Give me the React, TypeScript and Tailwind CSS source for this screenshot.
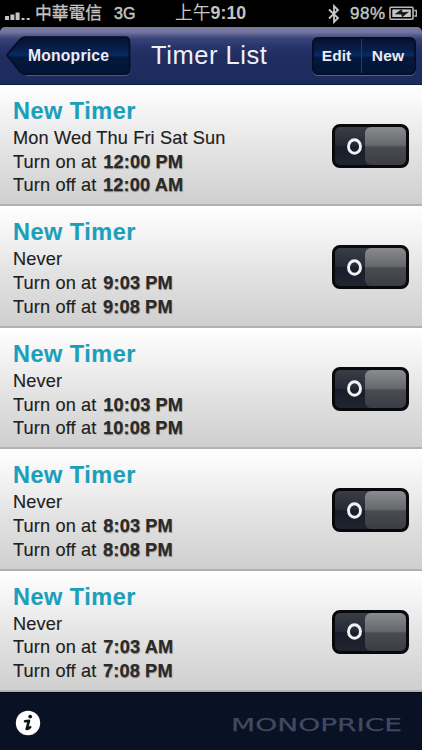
const timers = [
  { days: 'Mon Wed Thu Fri Sat Sun', on: '12:00 PM', off: '12:00 AM' },
  { days: 'Never', on: '9:03 PM', off: '9:08 PM' },
  { days: 'Never', on: '10:03 PM', off: '10:08 PM' },
  { days: 'Never', on: '8:03 PM', off: '8:08 PM' },
  { days: 'Never', on: '7:03 AM', off: '7:08 PM' },
];

function StatusBar() {
  return (
    <div className="flex h-[27px] shrink-0 items-center bg-black pl-[5px] pr-[4px] text-[17px] leading-[27px] text-[#c4c4c4]">
      <svg width="26" height="10" viewBox="0 0 26 10" fill="#c4c4c4" className="mt-[4px]">
        <rect x="0" y="5" width="4" height="4" />
        <rect x="5.4" y="3.5" width="4" height="5.5" />
        <rect x="10.6" y="1.5" width="4" height="7.5" />
        <rect x="16.5" y="7" width="3" height="2" />
        <rect x="21.7" y="7" width="3" height="2" />
      </svg>
      <span className="ml-[4px] w-[79px] whitespace-nowrap text-[16.8px] [-webkit-text-stroke:0.3px_#c4c4c4]">中華電信</span>
      <span className="w-[61px] text-[16px] [-webkit-text-stroke:0.5px_#c4c4c4]">3G</span>
      <span className="w-[152px] whitespace-nowrap text-[17.8px] font-bold">
        <span className="font-normal">上午</span>9:10
      </span>
      <svg width="14" height="20" viewBox="0 0 14 20" fill="none" stroke="#c8c8c8" strokeWidth="1.8" className="mt-px">
        <path d="M2 5.5 L11 14 L7 18 V2 L11 6 L2 14.5" />
      </svg>
      <span className="ml-[9px] w-[39px] whitespace-nowrap text-[17px] tracking-[0.5px] [-webkit-text-stroke:0.4px_#c4c4c4]">98%</span>
      <svg width="28" height="15" viewBox="0 0 28 15" fill="none">
        <rect x="1" y="1.2" width="23" height="12" rx="1" stroke="#b8b8b8" strokeWidth="1.6" />
        <path d="M25.2 4.5 H27.4 V10 H25.2" stroke="#b8b8b8" strokeWidth="1.4" />
        <rect x="3.3" y="3.4" width="18.5" height="7.6" fill="#c6c6c6" />
        <path d="M5.5 8.3 L12.5 3.2 L13.6 6.2 L20 5.8 L13.2 11.2 L12.2 8.4 Z" fill="#181818" />
      </svg>
    </div>
  );
}

function NavBar() {
  return (
    <div className="bg-black">
      <header className="flex h-[58px] items-center rounded-t-[5px] border-b border-[#101c43] bg-[linear-gradient(#77789c_0,#7476a0_5px,#565e8c_8px,#364278_12px,#27346a_20px,#1f2d60_30px,#1c2b5e_100%)] pl-[6px] pr-[6px] text-white">
        <div className="relative flex h-[40px] w-[125px] items-center">
          <svg width="125" height="40" viewBox="0 0 125 40" className="absolute inset-0">
            <defs>
              <linearGradient id="back" x1="0" y1="0" x2="0" y2="1">
                <stop offset="0" stopColor="#071230" />
                <stop offset="0.36" stopColor="#07204d" />
                <stop offset="0.48" stopColor="#072b68" />
                <stop offset="0.55" stopColor="#04183d" />
                <stop offset="1" stopColor="#021537" />
              </linearGradient>
            </defs>
            <path d="M20 39.3 H119 Q124 39.3 124 34" fill="none" stroke="#56618a" />
            <path
              d="M19 1.2 H119 Q123.5 1.2 123.5 6 V33 Q123.5 38 119 38 H19 Q16 38 14 35.6 L2 20.5 Q0.8 19 2 17.5 L14 3.6 Q16 1.2 19 1.2 Z"
              fill="url(#back)" stroke="#070d24" strokeWidth="1.8"
            />
          </svg>
          <span className="relative ml-[22px] text-[15.7px] font-bold tracking-[0.2px] text-[#ececf2]">Monoprice</span>
        </div>
        <h1 className="ml-[20px] w-[161px] whitespace-nowrap text-[25.5px] tracking-[0.55px] text-[#f0f0f6]">Timer List</h1>
        <div className="flex h-[38px] w-[104px] rounded-[6px] border-2 border-[#070d24] bg-[linear-gradient(#071230_0%,#07204d_36%,#072b68_48%,#04183d_55%,#021537_100%)] text-[15.5px] font-bold text-[#ececf2] shadow-[0_1px_0_#56618a]">
          <button className="w-[48px] border-r border-[#263a6c] pr-[2px]">Edit</button>
          <button className="flex-1 tracking-[0.2px]">New</button>
        </div>
      </header>
    </div>
  );
}

function Toggle() {
  return (
    <button className="flex h-[44px] w-[77px] rounded-[8px] border-[3px] border-[#08090c] bg-[linear-gradient(#3a3d46_0%,#262a35_48%,#181d2a_52%,#20242f_100%)]">
      <span className="flex h-full w-[30px] items-center justify-end">
        <svg width="17" height="19" viewBox="0 0 17 19" fill="none" className="mr-[2px]">
          <ellipse cx="8.5" cy="9.5" rx="6" ry="6.8" stroke="#f2f2f4" strokeWidth="2.9" />
        </svg>
      </span>
      <span className="h-full flex-1 rounded-[6px] bg-[linear-gradient(#8a8b8f_0%,#66686c_48%,#494b51_53%,#3b3d44_100%)]" />
    </button>
  );
}

function TimeLine({ label, time }: { label: string; time: string }) {
  return (
    <p>
      {label}{' '}
      <b className="ml-[1.5px] text-[#2a2a2a] [text-shadow:0.5px_0.5px_1px_#00000066]">{time}</b>
    </p>
  );
}

export default function App() {
  return (
    <div className="flex h-[750px] w-[422px] flex-col overflow-hidden bg-[#091224] font-['Liberation_Sans','Noto_Sans_CJK_TC',sans-serif]">
      <StatusBar />
      <NavBar />
      <main className="flex h-[607px] shrink-0 flex-col">
        {timers.map((timer) => (
          <section
            key={timer.on}
            className="flex flex-1 items-start justify-between border-b-2 border-[#b2b2b2] bg-[linear-gradient(#ffffff_0%,#f3f3f3_25%,#e3e3e3_55%,#cfcfcf_100%)] pl-[13px] pr-[13px]"
          >
            <div className="whitespace-nowrap pt-[12px] text-[18.2px] leading-[23.7px] tracking-[0.13px] text-[#1e1e1e] [-webkit-text-stroke:0.15px]">
              <h2 className="h-[30px] text-[23.5px] font-bold leading-[28px] tracking-[0.5px] text-[#1c9fba]">New Timer</h2>
              <p>{timer.days}</p>
              <TimeLine label="Turn on at" time={timer.on} />
              <TimeLine label="Turn off at" time={timer.off} />
            </div>
            <div className="pt-[39px]">
              <Toggle />
            </div>
          </section>
        ))}
      </main>
      <footer className="flex flex-1 items-center justify-between border-t border-[#03060f] pl-[15px] pr-[20px]">
        <svg width="26" height="26" viewBox="0 0 26 26" className="mt-[3px]">
          <circle cx="13" cy="13" r="12.2" fill="#fff" />
          <circle cx="15.2" cy="6.6" r="1.9" fill="#111318" />
          <path d="M10 11.2 L14 10.9 L11.6 19 Q13.2 19.4 15.2 17.2" fill="none" stroke="#111318" strokeWidth="2.6" strokeLinejoin="round" strokeLinecap="round" />
        </svg>
        <svg width="171" height="22" viewBox="0 0 171 22" className="mt-[4px]">
          <text
            x="0" y="17.5" fontSize="18.5" fill="#414960" stroke="#414960" strokeWidth="0.25"
            textLength="171" lengthAdjust="spacingAndGlyphs" className="font-['DejaVu_Sans',sans-serif]"
          >
            MONOPRICE
          </text>
        </svg>
      </footer>
    </div>
  );
}
